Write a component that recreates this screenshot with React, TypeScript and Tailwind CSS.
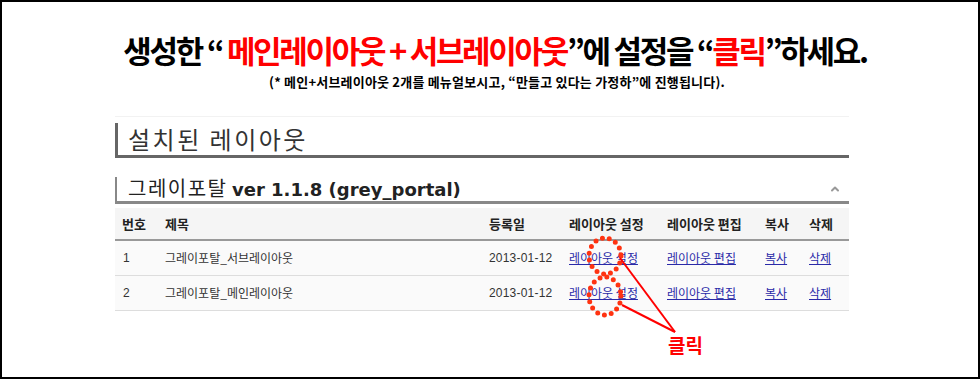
import { ChevronUp } from "lucide-react"

const rows = [
    { no: 1, title: "그레이포탈_서브레이아웃", date: "2013-01-12" },
    { no: 2, title: "그레이포탈_메인레이아웃", date: "2013-01-12" },
]

const cols = "grid grid-cols-[43px_324px_80px_98px_98px_44px_47px]"

const Annotation = () => (
    <svg className="absolute left-0 top-0 pointer-events-none" width="980" height="388">
        <ellipse cx="605" cy="256" rx="16" ry="18" fill="none" stroke="#ff3311" strokeWidth="5" strokeLinecap="round" strokeDasharray="0 7" />
        <ellipse cx="605" cy="296" rx="16" ry="19" fill="none" stroke="#ff3311" strokeWidth="5" strokeLinecap="round" strokeDasharray="0 7" />
        <line x1="620" y1="258" x2="675" y2="332" stroke="#ff0000" strokeWidth="2" />
        <line x1="622" y1="305" x2="675" y2="332" stroke="#ff0000" strokeWidth="2" />
    </svg>
)

export default function App() {
    return (
        <div className="relative w-[980px] h-[388px] bg-white" style={{ fontFamily: '"Noto Sans CJK KR", "Noto Sans", sans-serif' }}>
            <div className="h-[379px] border-2 border-black">
                <h1 className="pt-[25px] ml-[10px] text-center text-[31px] leading-[45px] font-bold tracking-[-2.3px] text-black">
                    생성한 “ <span className="text-[#ff0000]">메인레이아웃 + 서브레이아웃</span>”에 설정을 “<span className="text-[#ff0000]">클릭</span>”하세요.
                </h1>
                <p className="ml-[14px] text-center text-[13px] leading-[19px] font-bold tracking-[0.2px] text-black">
                    (* 메인+서브레이아웃 2개를 메뉴얼보시고, “만들고 있다는 가정하”에 진행됩니다).
                </p>

                <div className="ml-[113px] w-[734px] mt-[25px] border-t border-[#f2f2f2] pt-[6px]">
                    <h2 className="h-[35px] border-l-[3px] border-b-[3px] border-[#666] pl-[10px] text-[24px] leading-[32px] text-[#333] tracking-[2.5px]">
                        설치된 레이아웃
                    </h2>

                    <div className="mt-[19px] h-[27px] flex items-center justify-between border-l-2 border-b-[3px] border-[#888] pl-[11px] pr-[8px]">
                        <h3 className="text-[20px] leading-[24px] text-[#222]">
                            <span className="tracking-[1.5px]">그레이포탈</span> <span className="font-bold text-[18px]" style={{ fontFamily: '"DejaVu Sans", sans-serif' }}>ver 1.1.8 (grey_portal)</span>
                        </h3>
                        <ChevronUp className="w-[12px] h-[12px] text-[#999]" strokeWidth={4} />
                    </div>

                    <div className="mt-[4px] text-[12px] text-[#333]">
                        <div className={`${cols} h-[33px] items-center bg-[#f5f5f5] border-b-2 border-[#999] text-[13px] font-bold text-[#222]`}>
                            <span className="pl-[7px]">번호</span>
                            <span className="pl-[7px]">제목</span>
                            <span className="pl-[7px]">등록일</span>
                            <span className="pl-[7px]">레이아웃 설정</span>
                            <span className="pl-[7px]">레이아웃 편집</span>
                            <span className="pl-[7px]">복사</span>
                            <span className="pl-[7px]">삭제</span>
                        </div>
                        {rows.map(row => (
                            <div key={row.no} className={`${cols} h-[35px] items-center bg-[#fafafa] border-b border-[#dddddd]`}>
                                <span className="pl-[8px]" style={{ fontFamily: '"Liberation Sans", sans-serif' }}>{row.no}</span>
                                <span className="pl-[7px]">{row.title}</span>
                                <span className="pl-[7px] tracking-[0.2px]" style={{ fontFamily: '"Liberation Sans", sans-serif' }}>{row.date}</span>
                                <a className="pl-[7px] text-[#2a2aa8] underline" href="#">레이아웃 설정</a>
                                <a className="pl-[7px] text-[#2a2aa8] underline" href="#">레이아웃 편집</a>
                                <a className="pl-[7px] text-[#2a2aa8] underline" href="#">복사</a>
                                <a className="pl-[7px] text-[#2a2aa8] underline" href="#">삭제</a>
                            </div>
                        ))}
                    </div>
                </div>
            </div>

            <Annotation />
            <span className="absolute left-[668px] top-[333px] text-[19px] leading-[24px] font-bold text-[#ff0000]">클릭</span>
        </div>
    )
}
